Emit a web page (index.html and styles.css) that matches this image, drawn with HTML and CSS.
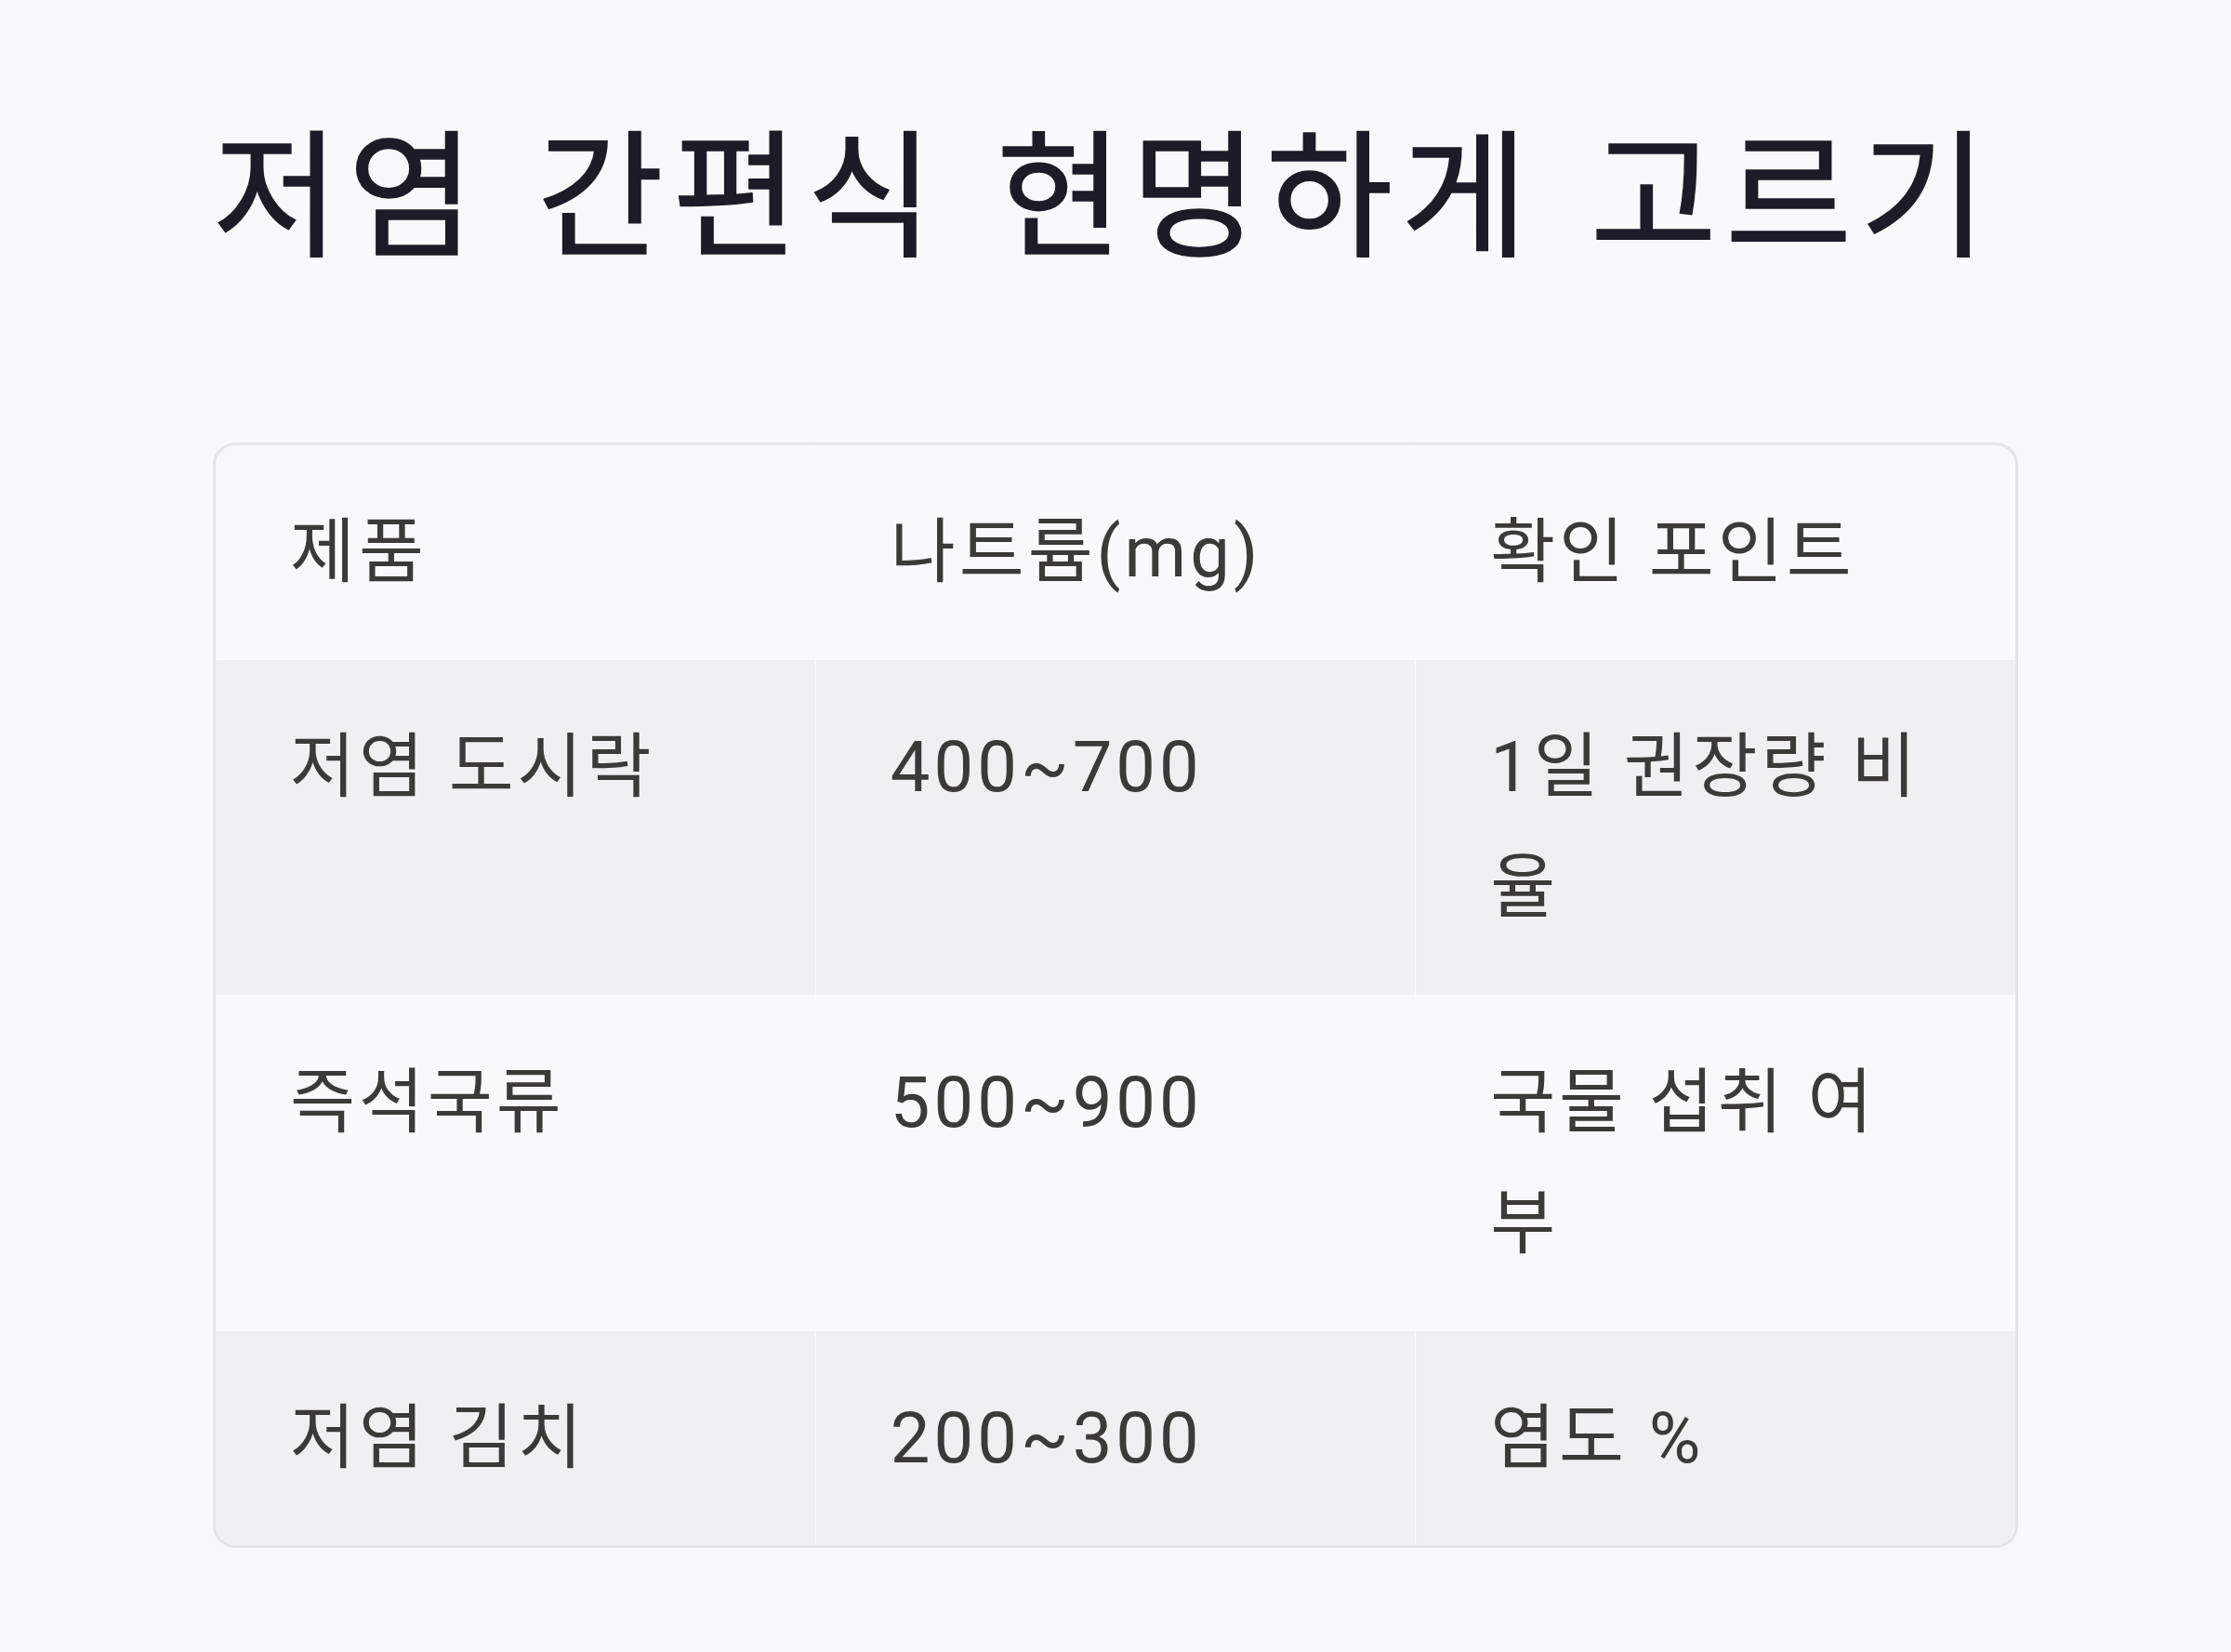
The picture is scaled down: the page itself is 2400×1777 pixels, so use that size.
FILE: index.html
```html
<!DOCTYPE html>
<html lang="ko">
<head>
<meta charset="utf-8">
<title>저염 간편식 현명하게 고르기</title>
<link rel="stylesheet" href="styles.css">
</head>
<body>
<main class="page">
  <h1 class="title">저염 간편식 현명하게 고르기</h1>
  <div class="table-wrap">
    <table class="sodium-table">
      <thead>
        <tr>
          <th>제품</th>
          <th>나트륨(mg)</th>
          <th>확인 포인트</th>
        </tr>
      </thead>
      <tbody>
        <tr>
          <td>저염 도시락</td>
          <td>400~700</td>
          <td>1일 권장량 비율</td>
        </tr>
        <tr>
          <td>즉석국류</td>
          <td>500~900</td>
          <td>국물 섭취 여부</td>
        </tr>
        <tr>
          <td>저염 김치</td>
          <td>200~300</td>
          <td>염도 %</td>
        </tr>
      </tbody>
    </table>
  </div>
</main>
</body>
</html>
```

FILE: styles.css
```css
html, body {
  margin: 0;
  padding: 0;
  background: #f9f9fb;
}

body {
  font-family: Roboto, "Noto Sans CJK KR", sans-serif;
  color: #3b3a38;
}

.page {
  width: 1942px;
  margin: 0 auto;
  padding-top: 112px;
  display: flex;
  flex-direction: column;
}

.title {
  margin: 0 0 189px 0;
  font-family: "Noto Sans CJK KR", sans-serif;
  font-size: 148px;
  font-weight: 400;
  line-height: 175px;
  color: #1c1c28;
  -webkit-text-stroke: 1.5px #1c1c28;
  letter-spacing: 9px;
  word-spacing: 8px;
  white-space: nowrap;
}

.table-wrap {
  border: 3px solid #e4e4e8;
  border-radius: 24px;
  overflow: hidden;
  background: #f9f9fb;
}

.sodium-table {
  width: 100%;
  border-collapse: collapse;
  table-layout: fixed;
  font-size: 76px;
  line-height: 130px;
  letter-spacing: 4px;
}

.sodium-table th,
.sodium-table td {
  padding: 50px 86px 50px 80px;
  text-align: left;
  vertical-align: top;
  font-weight: 400;
  color: #3b3a38;
  border: 1px solid #fbfbfc;
}

.sodium-table tr > :first-child { border-left: 0; }
.sodium-table tr > :last-child { border-right: 0; }
.sodium-table thead th { border-top: 0; }
.sodium-table tbody tr:last-child td { border-bottom: 0; }

.sodium-table tbody tr:nth-child(odd) td {
  background: #f0f0f2;
}
```
